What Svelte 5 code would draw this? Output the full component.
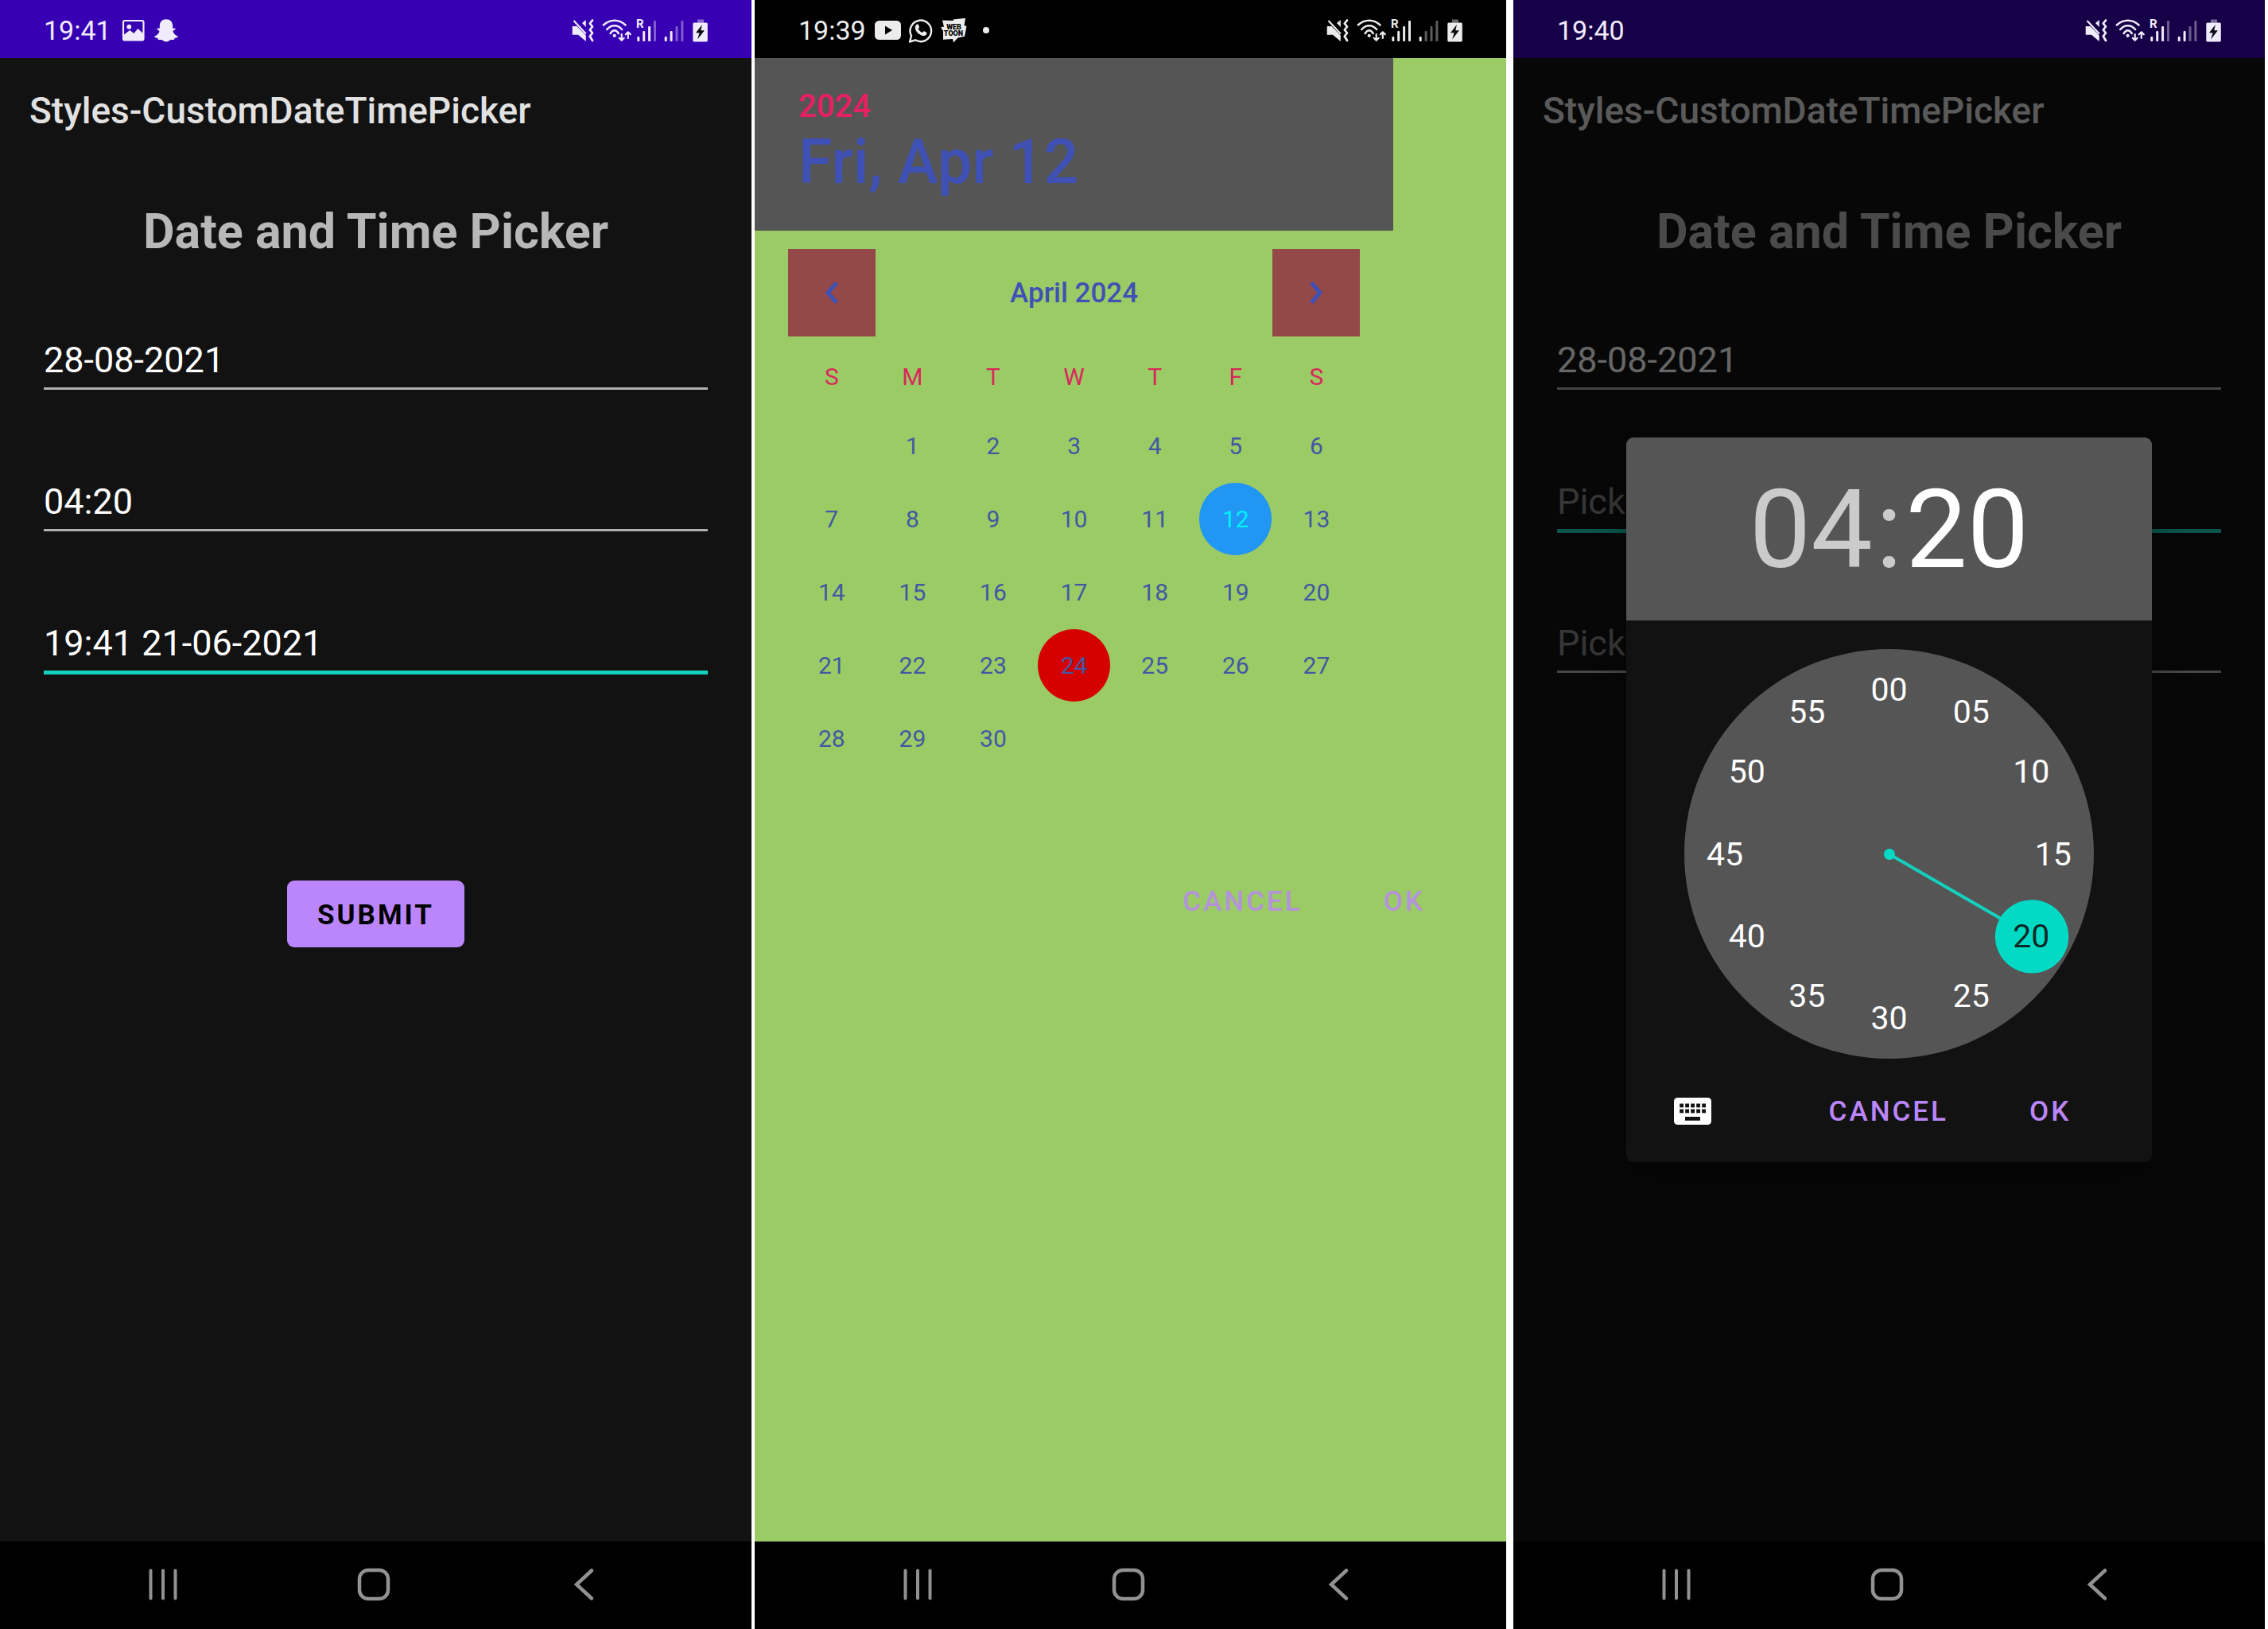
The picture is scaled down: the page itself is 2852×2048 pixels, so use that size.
<script>
  const weekdays = ['S', 'M', 'T', 'W', 'T', 'F', 'S'];
  const weeks = [0, 1, 2, 3, 4].map((w) =>
    [0, 1, 2, 3, 4, 5, 6].map((d) => {
      const day = w * 7 + d;
      return day >= 1 && day <= 30 ? day : null;
    })
  );

  let selectedDay = $state(12);
  const today = 24;

  let minute = $state(20);
  const minutes = Array.from({ length: 12 }, (_, i) => {
    const a = (i * Math.PI) / 6;
    return {
      value: i * 5,
      label: String(i * 5).padStart(2, '0'),
      left: 50 + 40 * Math.sin(a),
      top: 50 - 40 * Math.cos(a)
    };
  });
  const angle = $derived((minute * Math.PI) / 30);
  const handX = $derived(257 + 206 * Math.sin(angle));
  const handY = $derived(257 - 206 * Math.cos(angle));

  const filled = [
    { label: 'Date', value: '28-08-2021', focused: false },
    { label: 'Time', value: '04:20', focused: false },
    { label: 'Date and time', value: '19:41 21-06-2021', focused: true }
  ];
  const partial = [
    { label: 'Date', value: '28-08-2021', focused: false },
    { label: 'Time', value: '', focused: true },
    { label: 'Date and time', value: '', focused: false }
  ];
</script>

{#snippet statusIcons(first, second)}
  <div class="status-right">
    <svg width="32" height="30" viewBox="0 0 32 30" aria-hidden="true">
      <path d="M.7 10H6.5L17.8 21.5V29L8 20.7H.7z" fill="currentColor" />
      <path d="M13 6l4.8-4v9z" fill="currentColor" />
      <path d="M2.5 3l15.3 16.5" stroke="currentColor" stroke-width="2.2" />
      <path d="M26 2.5L22.8 6.5 26 10.5 22.8 14.5 26 18.5 22.8 22.5 26 28" fill="none" stroke="currentColor" stroke-width="2.8" stroke-linejoin="round" stroke-linecap="round" />
    </svg>
    <svg width="37" height="30" viewBox="0 0 37 30" aria-hidden="true">
      <g fill="none" stroke="currentColor" stroke-width="2.5" stroke-linecap="round" stroke-linejoin="round">
        <path d="M1.8 8.5Q8 2.8 15.7 2.8T29.6 8.5" />
        <path d="M6.2 14Q10.400 9.200 15.700 9.200T25.200 14" />
        <path d="M10.600 19Q13 15.300 15.700 15.300T20.800 19" />
        <path d="M24.700 20V27M21.700 24.800l3 3 3-3M32.800 25V17.500M29.800 20.300l3-3 3 3" stroke-width="2.2" />
      </g>
      <circle cx="15.700" cy="21.800" r="2.100" fill="currentColor" />
    </svg>
    <svg width="29" height="30" viewBox="0 0 29 30" aria-hidden="true">
      <text x="0" y="12" class="roaming">R</text>
      {#each [23, 16, 10, 3] as y, i}
        <rect x={1.3 + i * 6.9} {y} width="3" height={29 - y} rx="1" fill="currentColor" opacity={i < first ? 1 : 0.4} />
      {/each}
    </svg>
    <svg width="30" height="30" viewBox="0 0 30 30" aria-hidden="true">
      {#each [23, 16, 10, 3] as y, i}
        <rect x={0.7 + i * 6.9} {y} width="3" height={29 - y} rx="1" fill="currentColor" opacity={i < second ? 1 : 0.4} />
      {/each}
    </svg>
    <svg width="19" height="30" viewBox="0 0 19 30" aria-hidden="true">
      <rect x="6" y="1.500" width="8" height="4.200" fill="currentColor" opacity=".45" />
      <rect x=".3" y="5.500" width="18.500" height="24" rx="1.500" fill="currentColor" />
      <path d="M11.900 8L4 18.300H8.500L6.200 26.500 14.900 15.300H10.300z" fill="#0b0b12" />
    </svg>
  </div>
{/snippet}

{#snippet navBar()}
  <nav class="navbar" aria-label="System navigation">
    <button aria-label="Recent apps">
      <svg width="48" height="48" viewBox="0 0 48 48"><path d="M8.500 6.500V41.500M24 6.500V41.500M39.500 6.500V41.500" stroke-width="4" /></svg>
    </button>
    <button aria-label="Home">
      <svg width="48" height="48" viewBox="0 0 48 48"><rect x="6" y="6" width="36" height="36" rx="11" stroke-width="4.500" /></svg>
    </button>
    <button aria-label="Back">
      <svg width="48" height="48" viewBox="0 0 48 48"><path d="M34 6.500L15 24 34 41.500" stroke-width="4.500" /></svg>
    </button>
  </nav>
{/snippet}

{#snippet form(fields)}
  <header class="appbar">Styles-CustomDateTimePicker</header>
  <h1>Date and Time Picker</h1>
  <div class="fields">
    {#each fields as f}
      <label class="field">
        <input class:focused={f.focused} type="text" value={f.value} placeholder="Pick" aria-label={f.label} />
      </label>
    {/each}
  </div>
{/snippet}

<main>
  <section class="phone">
    <div class="status purple">
      <span class="clock">19:41</span>
      <svg width="34" height="34" viewBox="0 0 34 34" aria-hidden="true">
        <rect x="4" y="5" width="25.500" height="24.500" rx="2" fill="none" stroke="currentColor" stroke-width="2.200" />
        <circle cx="11.300" cy="12.700" r="2.900" fill="currentColor" />
        <path d="M5 22.500l7.300-5.500 5 4 5-6 6.700 6V29H5z" fill="currentColor" />
      </svg>
      <svg width="34" height="34" viewBox="0 0 34 34" aria-hidden="true">
        <path fill="currentColor" d="M17 3.300c-5 0-8.200 3.500-8.200 8.200v3c-1.200.500-2.600-.500-3.400.500-.700 1.200 2.800 2 3 3.300 0 2-3 5.500-6 6.300-1 .9 1 2.100 3.900 2.500.6.500.3 1.800 1 2 1 .2 2.800-.4 4.500.2 1.700.8 2.900 2.200 5.200 2.200s3.500-1.400 5.200-2.200c1.700-.6 3.500 0 4.500-.2.700-.2.400-1.500 1-2 2.900-.4 4.900-1.600 3.900-2.500-3-.8-6-4.300-6-6.300.2-1.300 3.700-2.100 3-3.300-.8-1-2.200 0-3.400-.5v-3c0-4.700-3.200-8.200-8.200-8.200z" />
      </svg>
      {@render statusIcons(3, 2)}
    </div>
    <div class="screen">
      {@render form(filled)}
      <button class="submit">SUBMIT</button>
    </div>
    {@render navBar()}
  </section>

  <section class="phone second">
    <div class="status black">
      <span class="clock">19:39</span>
      <svg width="34" height="34" viewBox="0 0 34 34" aria-hidden="true">
        <rect x="0" y="5" width="33" height="24" rx="5.500" fill="currentColor" />
        <path d="M13 11.500V22.500L22 17z" fill="#000" />
      </svg>
      <svg width="34" height="34" viewBox="0 0 34 34" aria-hidden="true">
        <path d="M3 31.500l2-7.500A13.300 13.300 0 1 1 10 29.300z" fill="none" stroke="currentColor" stroke-width="2.400" stroke-linejoin="round" />
        <path d="M11.500 9.800c.9-.8 1.900-.7 2.300.2l1.200 2.800c.2.600-.2 1.200-1.300 2.400 1.200 2.300 2.900 3.900 5.200 4.800 1.200-1.500 1.600-2 2.300-1.700l2.900 1.400c.6.400.5 1.400 0 2.500-.8 1.500-3.100 2.200-5 1.700-5-1.300-8.700-5.300-9.300-9.300-.1-1.900.6-3.700 1.700-4.800z" fill="currentColor" />
      </svg>
      <svg width="34" height="34" viewBox="0 0 34 34" aria-hidden="true">
        <path d="M3 4.500L17 5l-.5-1.500L32 1.700l-1.500 9.500 3 .5-2.500 13-8.500 1.800-5.500 6-1-4.500-12 .8L4 18 1 13.500l4-1z" fill="currentColor" />
        <text x="17.500" y="16" class="toon">WEB</text>
        <text x="17" y="24" class="toon">TOON</text>
      </svg>
      <svg width="34" height="34" viewBox="0 0 34 34" aria-hidden="true">
        <circle cx="17" cy="17" r="4" fill="currentColor" />
      </svg>
      {@render statusIcons(4, 1)}
    </div>
    <div class="screen calendar-screen">
      <div class="date-header">
        <button class="year">2024</button>
        <button class="full-date">Fri, Apr 12</button>
      </div>
      <div class="calendar">
        <div class="month">
          <button aria-label="Previous month">
            <svg width="34" height="34" viewBox="0 0 34 34"><path d="M23 4.500L12 17 23 29.500" /></svg>
          </button>
          <span>April 2024</span>
          <button aria-label="Next month">
            <svg width="34" height="34" viewBox="0 0 34 34"><path d="M11 4.500L22 17 11 29.500" /></svg>
          </button>
        </div>
        <table>
          <thead>
            <tr>{#each weekdays as d}<th scope="col">{d}</th>{/each}</tr>
          </thead>
          <tbody>
            {#each weeks as week}
              <tr>
                {#each week as day}
                  <td>
                    {#if day}
                      <button class:today={day === today} class:selected={day === selectedDay} onclick={() => (selectedDay = day)}>{day}</button>
                    {/if}
                  </td>
                {/each}
              </tr>
            {/each}
          </tbody>
        </table>
      </div>
      <div class="actions">
        <button>CANCEL</button>
        <button>OK</button>
      </div>
    </div>
    {@render navBar()}
  </section>

  <section class="phone third">
    <div class="status dim">
      <span class="clock">19:40</span>
      {@render statusIcons(3, 2)}
    </div>
    <div class="screen">
      {@render form(partial)}
      <div class="scrim">
        <div class="dialog" role="dialog" aria-label="Pick a time">
          <div class="time">
            <button class="hour">04</button><span>:</span><button>{String(minute).padStart(2, '0')}</button>
          </div>
          <div class="face">
            <svg viewBox="0 0 514 514" aria-hidden="true">
              <line x1="257" y1="257" x2={handX} y2={handY} />
              <circle cx="257" cy="257" r="7" />
              <circle cx={handX} cy={handY} r="46" />
            </svg>
            {#each minutes as m}
              <button class:picked={m.value === minute} style="left: {m.left}%; top: {m.top}%" onclick={() => (minute = m.value)}>{m.label}</button>
            {/each}
          </div>
          <div class="actions">
            <button class="keyboard" aria-label="Switch to text input">
              <svg width="47" height="34" viewBox="0 0 47 34">
                <rect width="47" height="34" rx="4.500" fill="#fff" />
                {#each [0, 1, 2, 3, 4] as i}
                  <rect x={7.200 + i * 7} y="7.500" width="4.800" height="4.800" fill="#121212" />
                  <rect x={7.200 + i * 7} y="14.500" width="4.800" height="4.800" fill="#121212" />
                {/each}
                <rect x="14" y="24" width="19" height="4.800" fill="#121212" />
              </svg>
            </button>
            <button>CANCEL</button>
            <button>OK</button>
          </div>
        </div>
      </div>
    </div>
    {@render navBar()}
  </section>
</main>

<style>
  :global(body) {
    background: #fff;
  }

  main {
    display: flex;
    min-height: 100vh;
    padding-right: 4px;
    box-sizing: border-box;
    font-family: Roboto, "Liberation Sans", sans-serif;
  }

  button,
  input {
    font: inherit;
    color: inherit;
    border: 0;
    margin: 0;
    padding: 0;
    background: none;
    border-radius: 0;
    outline: 0;
  }

  svg {
    display: block;
    flex: none;
    overflow: visible;
  }

  .phone {
    flex: 1;
    min-width: 0;
    display: flex;
    flex-direction: column;
    background: #121212;
  }

  .second {
    margin-left: 4px;
  }

  .third {
    margin-left: 9px;
  }

  /* status bar */
  .status {
    display: flex;
    align-items: center;
    gap: 7px;
    height: 73px;
    padding: 2px 55px 0;
    box-sizing: border-box;
    color: #f1ecfb;
  }

  .purple {
    background: #3700b3;
  }

  .black {
    background: #000;
    color: #ececec;
  }

  .dim {
    background: #160048;
  }

  .clock {
    font-size: 34px;
    line-height: 40px;
    margin-right: 4px;
  }

  .status-right {
    display: flex;
    gap: 6px;
    margin-left: auto;
  }

  .roaming {
    font-size: 15px;
    font-weight: 700;
    fill: currentColor;
  }

  .toon {
    font-size: 9px;
    font-weight: 900;
    text-anchor: middle;
    fill: #000;
  }

  /* system navigation */
  .navbar {
    display: flex;
    justify-content: space-between;
    align-items: center;
    height: 110px;
    padding: 0 187px 2px 181px;
    box-sizing: border-box;
    background: #000;
  }

  .navbar path,
  .navbar rect {
    fill: none;
    stroke: #929292;
    stroke-linecap: round;
  }

  /* form */
  .screen {
    position: relative;
    flex: 1;
    display: flex;
    flex-direction: column;
  }

  .appbar {
    padding: 0 37px;
    font-size: 46px;
    font-weight: 500;
    line-height: 132px;
    color: #e1e1e1;
  }

  h1 {
    margin: 51px 0 100px;
    font-size: 61px;
    font-weight: 700;
    line-height: 70px;
    text-align: center;
    color: #b8b8b8;
  }

  .fields {
    padding: 0 55px;
  }

  .field {
    display: block;
    height: 178px;
  }

  .field input {
    display: block;
    width: 100%;
    box-sizing: content-box;
    height: 54px;
    padding-bottom: 7px;
    border-bottom: 3px solid #b0b0b0;
    font-size: 45px;
    line-height: 54px;
    color: #fff;
  }

  .field .focused {
    border-bottom: 5px solid #14d1be;
  }

  .field input::placeholder {
    color: #888;
    opacity: 1;
  }

  .submit {
    align-self: center;
    margin-top: 147px;
    height: 84px;
    padding: 2px 38px 0;
    border-radius: 9px;
    background: #bb86fc;
    color: #000;
    font-size: 35px;
    font-weight: 700;
    letter-spacing: 3px;
  }

  /* date picker */
  .calendar-screen {
    background: #9bcb65;
    color: #3f51b5;
  }

  .date-header,
  .calendar {
    width: 85%;
    box-sizing: border-box;
  }

  .date-header {
    display: flex;
    flex-direction: column;
    align-items: flex-start;
    padding: 37px 55px 40px;
    background: #555;
    font-weight: 500;
  }

  .year {
    font-size: 40px;
    line-height: 48px;
    color: #e91e63;
  }

  .full-date {
    font-size: 77px;
    line-height: 92px;
  }

  .calendar {
    padding: 23px 42px 0;
  }

  .month {
    display: flex;
    justify-content: space-between;
    align-items: center;
    font-size: 35px;
    font-weight: 500;
  }

  .month button {
    display: grid;
    place-items: center;
    width: 110px;
    height: 110px;
    background: #954848;
  }

  .month path {
    fill: none;
    stroke: #3f51b5;
    stroke-width: 5;
  }

  .calendar table {
    width: 100%;
    margin-top: 9px;
    padding: 0 4px;
    table-layout: fixed;
    border-spacing: 0;
    font-size: 30px;
  }

  th,
  td {
    padding: 0;
    text-align: center;
  }

  th {
    height: 82px;
    font-weight: 400;
    color: #d8275c;
  }

  td {
    height: 92px;
    color: #4258a4;
  }

  td button {
    display: block;
    width: 91px;
    height: 91px;
    margin: 0 auto;
    border-radius: 50%;
  }

  td .today {
    background: #d50000;
  }

  td .selected {
    background: #2196f3;
    color: #00f0ff;
  }

  .actions {
    display: flex;
    justify-content: flex-end;
    align-items: center;
    height: 84px;
    padding-right: 51px;
    color: #bb86fc;
    font-size: 35px;
    font-weight: 500;
  }

  .actions button {
    height: 84px;
    padding: 0 51px;
    letter-spacing: 3px;
  }

  .calendar-screen .actions {
    margin-top: 117px;
    color: #b592dc;
  }

  /* time picker */
  .scrim {
    position: absolute;
    inset: 0;
    display: flex;
    align-items: center;
    justify-content: center;
    background: rgba(0, 0, 0, 0.6);
  }

  .dialog {
    width: 70%;
    padding-bottom: 22px;
    border-radius: 9px;
    overflow: hidden;
    background: #121212;
    box-shadow: 0 20px 40px rgba(0, 0, 0, 0.3);
  }

  .time {
    display: flex;
    justify-content: center;
    align-items: center;
    height: 230px;
    padding-top: 3px;
    box-sizing: border-box;
    background: #555;
    color: #fff;
    font-size: 138px;
  }

  .hour,
  .time span {
    color: #cbcbcb;
  }

  .time span {
    padding: 0 4px;
  }

  .face {
    position: relative;
    width: 78%;
    aspect-ratio: 1;
    margin: 36px auto 24px;
    border-radius: 50%;
    background: #555;
    color: #fff;
    font-size: 41px;
  }

  .face svg {
    width: 100%;
    height: 100%;
  }

  .face circle {
    fill: #03dac5;
  }

  .face line {
    stroke: #14d0bd;
    stroke-width: 4;
  }

  .face button {
    position: absolute;
    width: 92px;
    height: 92px;
    transform: translate(-50%, -50%);
  }

  .face .picked {
    color: #0c2926;
  }

  .dialog .keyboard {
    margin-right: auto;
    padding: 0 0 0 60px;
  }
</style>
